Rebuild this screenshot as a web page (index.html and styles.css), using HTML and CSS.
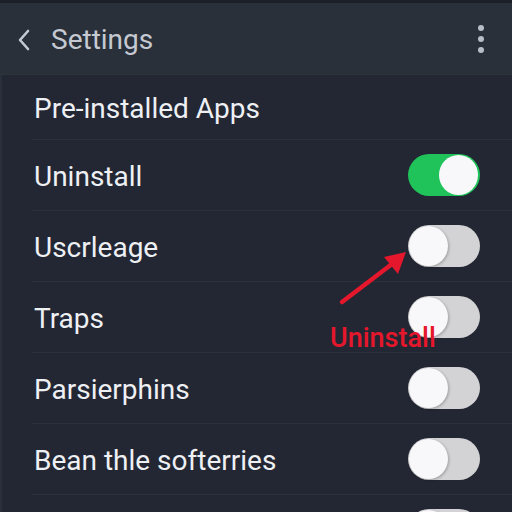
FILE: index.html
```html
<!DOCTYPE html>
<html>
<head>
<meta charset="utf-8">
<link rel="stylesheet" href="styles.css">
</head>
<body>
<div class="screen">
  <header class="appbar">
    <svg class="back" width="16" height="24" viewBox="0 0 16 24"><path d="M12 3 L4 12 L12 21" fill="none" stroke="#c5c9d2" stroke-width="2.6" stroke-linecap="round" stroke-linejoin="round"/></svg>
    <span class="title">Settings</span>
    <span class="kebab"><i></i><i></i><i></i></span>
  </header>
  <main class="list">
    <div class="section">Pre-installed Apps</div>
    <div class="row"><span class="label">Uninstall</span><span class="toggle on"><i></i></span></div>
    <div class="row"><span class="label">Uscrleage</span><span class="toggle"><i></i></span></div>
    <div class="row"><span class="label">Traps</span><span class="toggle"><i></i></span></div>
    <div class="row"><span class="label">Parsierphins</span><span class="toggle"><i></i></span></div>
    <div class="row"><span class="label">Bean thle softerries</span><span class="toggle"><i></i></span></div>
    <div class="row"><span class="label"></span><span class="toggle"><i></i></span></div>
  </main>
  <svg class="arrow" width="80" height="64" viewBox="0 0 80 64">
    <path d="M8 56 L58 18" stroke="#e5172c" stroke-width="4.5" stroke-linecap="round"/>
    <path d="M72 6 L50 11 L64 28 Z" fill="#e5172c"/>
  </svg>
  <span class="note">Uninstall</span>
</div>
</body>
</html>
```
FILE: styles.css
```css
* { box-sizing: border-box; }
html, body { margin: 0; padding: 0; }
body { background: #1b1f27; font-family: Roboto, "Noto Sans", sans-serif; }
.screen { position: relative; width: 512px; height: 512px; overflow: hidden; padding-top: 3px; background: #1b1f27; }
.appbar { height: 72px; background: #2a303a; display: flex; align-items: center; padding: 0 28px 0 16px; border-bottom: 1px solid #2c3438; }
.back { flex: none; margin-right: 19px; margin-top: 2px; }
.title { color: #c5c9d2; font-size: 28px; flex: 1; margin-top: 2px; }
.kebab { display: flex; flex-direction: column; gap: 5px; margin-top: 0px; }
.kebab i { display: block; width: 6px; height: 6px; border-radius: 50%; background: #b9bdc6; }
.list { background: #222733; height: 440px; border-left: 2px solid #2a303a; }
.section { height: 64px; display: flex; align-items: center; padding-left: 32px; color: #eef0f4; font-size: 28px; padding-top: 2px; }
.row { height: 71px; margin-left: 30px; border-top: 1px solid #2a303c; display: flex; align-items: center; justify-content: space-between; padding-left: 2px; padding-right: 32px; }
.label { color: #eef0f4; font-size: 28px; margin-top: 2px; }
.toggle { width: 72px; height: 42px; border-radius: 21px; background: #d3d3d5; position: relative; display: block; }
.toggle i { position: absolute; left: 1px; top: 1px; width: 39px; height: 40px; border-radius: 50%; background: #f8f8fa; box-shadow: 1px 1px 3px rgba(0,0,0,0.25); }
.toggle.on { background: #1fc35a; }
.toggle.on i { left: auto; right: 2px; box-shadow: none; }
.arrow { position: absolute; left: 334px; top: 246px; }
.note { position: absolute; left: 330px; top: 322px; color: #e5172c; font-size: 27px; font-weight: 500; }
```
